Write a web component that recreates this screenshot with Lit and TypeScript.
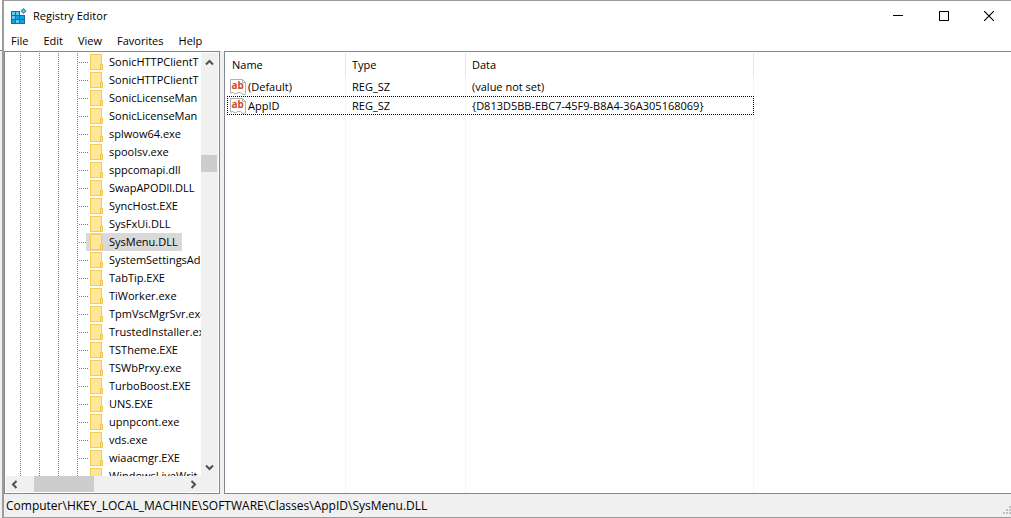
import { LitElement, html, svg, css } from "lit";
import { customElement, state } from "lit/decorators.js";

const KEYS = [
  "SonicHTTPClientT", "SonicHTTPClientT", "SonicLicenseMan", "SonicLicenseMan",
  "splwow64.exe", "spoolsv.exe", "sppcomapi.dll", "SwapAPODll.DLL", "SyncHost.EXE", "SysFxUi.DLL",
  "SysMenu.DLL", "SystemSettingsAd", "TabTip.EXE", "TiWorker.exe", "TpmVscMgrSvr.exe",
  "TrustedInstaller.exe", "TSTheme.EXE", "TSWbPrxy.exe", "TurboBoost.EXE", "UNS.EXE", "upnpcont.exe",
  "vds.exe", "wiaacmgr.EXE", "WindowsLiveWrit",
];

const VALUES = [
  { name: "(Default)", type: "REG_SZ", data: "(value not set)" },
  { name: "AppID", type: "REG_SZ", data: "{D813D5BB-EBC7-45F9-B8A4-36A305168069}" },
];

const folder = svg`
  <rect x="0.5" y="0.5" width="11" height="15" fill="#ffe698" stroke="#f2cc55"/>
  <path d="M10.5 15.5V10.5H12.5V15.5Z" fill="#ffe698" stroke="#edc343"/>`;

const chevron = (d: string) => html`<svg width="9" height="9" viewBox="0 0 9 9" aria-hidden="true">
  <path d=${d} fill="none" stroke="#505050" stroke-width="2"/></svg>`;

@customElement("title-bar")
export class TitleBar extends LitElement {
  static styles = css`
    :host { display: flex; align-items: center; height: 30px; padding-left: 7px; }
    h1 { margin: 0 auto 0 6px; font-size: 11px; font-weight: 400; line-height: 16px; }
    button { width: 46px; height: 30px; padding: 0; border: 0; background: none; display: grid; place-items: center; }
    button:last-child { width: 44px; }
    svg { display: block; }
  `;
  render() {
    return html`
      <svg width="16" height="16" viewBox="0 0 16 16" aria-hidden="true">
        <path d="M0 3H9V7H14V16H0Z" fill="#0b72a8"/>
        <path d="M1 4H4V7H1ZM5 4H8V7H5ZM1 8H4V11H1ZM5 12H8V15H5Z" fill="#5ecbf3"/>
        <path d="M5 8H8V11H5ZM9 8H13V11H9ZM1 12H4V15H1ZM9 12H13V15H9Z" fill="#12a3dc"/>
        <path d="M12.5 0L15.5 3L12.5 6L9.5 3Z" fill="#2c87b5"/>
        <path d="M12.5 1.5L14 3L12.5 4.5L11 3Z" fill="#6fcdf0"/>
      </svg>
      <h1>Registry Editor</h1>
      <button aria-label="Minimize"><svg width="10" height="10"><path d="M0 4.5H10" stroke="#000"/></svg></button>
      <button aria-label="Maximize"><svg width="10" height="10"><rect x="0.5" y="0.5" width="9" height="9" fill="none" stroke="#000"/></svg></button>
      <button aria-label="Close"><svg width="10" height="10"><path d="M0 0L10 10M10 0L0 10" stroke="#000" stroke-width="1.2"/></svg></button>
    `;
  }
}

@customElement("key-tree")
export class KeyTree extends LitElement {
  @state() private selected = "SysMenu.DLL";
  static styles = css`
    :host { display: grid; grid-template: minmax(0, 1fr) 16px / minmax(0, 1fr) 17px; box-sizing: border-box;
      min-height: 0; border: 1px solid #828790; padding: 1px 1px 1px 0; background: #fff; }
    .view { overflow: hidden; display: flex; }
    .guides { flex: none; display: flex; gap: 18px; padding-left: 15px; }
    .guide { width: 1px; background: repeating-linear-gradient(#808080 0 1px, transparent 1px 2px); }
    ul { list-style: none; margin: 0; padding: 0; flex: none; }
    li { height: 18px; display: flex; align-items: center; }
    .branch { width: 9px; height: 1px; margin-left: 1px; flex: none;
      background: repeating-linear-gradient(90deg, #808080 0 1px, transparent 1px 2px); }
    button { font: inherit; color: inherit; white-space: nowrap; border: 0; background: none; height: 18px;
      padding: 0 4px 0 2px; display: flex; align-items: center; gap: 6px; }
    button.on { background: #d9d9d9; margin-left: -2px; padding-left: 4px; }
    svg { display: block; flex: none; }
    .vbar, .hbar { background: #f0f0f0; display: flex; align-items: center; }
    .vbar { flex-direction: column; padding: 5px 1px 4px 0; }
    .hbar { grid-column: 1 / 3; padding: 0 20px 0 4px; margin-left: 1px; }
    .track { flex: 1; display: flex; align-self: stretch; }
    .vbar .track { flex-direction: column; }
    .thumb { background: #cdcdcd; }
    .vbar .thumb { height: 17px; margin-top: 88px; }
    .hbar .thumb { width: 60px; margin-left: 15px; }
  `;
  render() {
    return html`
      <div class="view">
        <div class="guides">${[0, 1, 2, 3].map(() => html`<span class="guide"></span>`)}</div>
        <ul>${KEYS.map((k) => html`<li><span class="branch"></span>
          <button class=${k === this.selected ? "on" : ""} @click=${() => (this.selected = k)}>
            <svg width="13" height="16" viewBox="0 0 13 16" aria-hidden="true">${folder}</svg><span>${k}</span>
          </button></li>`)}</ul>
      </div>
      <div class="vbar">${chevron("M1 6.5L4.5 3L8 6.5")}<div class="track"><div class="thumb"></div></div>${chevron("M1 2.5L4.5 6L8 2.5")}</div>
      <div class="hbar">${chevron("M6.5 1L3 4.5L6.5 8")}<div class="track"><div class="thumb"></div></div>${chevron("M2.5 1L6 4.5L2.5 8")}</div>
    `;
  }
}

@customElement("value-list")
export class ValueList extends LitElement {
  static styles = css`
    :host { display: grid; grid-template-columns: 527px minmax(0, 1fr); box-sizing: border-box;
      min-height: 0; border: 1px solid #828790; border-right: 0; background: #fff; padding: 1px 0 0 2px; }
    .columns { background:
      linear-gradient(#f0f6fc, #f0f6fc) 118px 0 / 1px 100% no-repeat,
      linear-gradient(#f0f6fc, #f0f6fc) 238px 0 / 1px 100% no-repeat,
      linear-gradient(#f0f6fc, #f0f6fc) 526px 0 / 1px 100% no-repeat; }
    table { width: 100%; border-collapse: separate; border-spacing: 0; table-layout: fixed; }
    th, td { padding: 0 0 0 6px; font-weight: 400; text-align: left; white-space: nowrap; box-sizing: border-box; }
    th { height: 24px; border-right: 1px solid #e5e5e5; }
    th:first-child { padding-left: 5px; }
    td { height: 19px; }
    td:first-child { padding-left: 3px; }
    .name { display: flex; align-items: center; gap: 2px; }
    .name svg { display: block; }
    .focus { outline: 1px dotted #000; outline-offset: -1px; }
    .c1 { width: 119px; } .c2 { width: 120px; }
  `;
  render() {
    return html`<div class="columns"><table>
      <colgroup><col class="c1"><col class="c2"><col></colgroup>
      <thead><tr><th>Name</th><th>Type</th><th>Data</th></tr></thead>
      <tbody>${VALUES.map((v, i) => html`<tr class=${i === 1 ? "focus" : ""}>
        <td><span class="name"><svg width="16" height="16" viewBox="0 0 16 16" aria-hidden="true">
          <path d="M.5 14V.5H12.5L15.5 3.5V15L13 15.5L10.5 13.5L8 13.5L5 15L3 13.5Z" fill="#fff" stroke="#b0b0b0"/>
          <path d="M12.5 .5V3.5H15.5" fill="none" stroke="#b0b0b0"/>
          <text x="1.5" y="10" font-family="Noto Sans, sans-serif" font-weight="700" font-size="10" fill="#d64a27">ab</text>
        </svg>${v.name}</span></td><td>${v.type}</td><td>${v.data}</td></tr>`)}</tbody>
    </table></div>`;
  }
}

@customElement("app-root")
export class AppRoot extends LitElement {
  static styles = css`
    :host { display: grid; grid-template: minmax(0, 1fr) / 2px minmax(0, 1fr); height: 100vh; overflow: hidden; color: #000;
      font: 11px/16px "Open Sans", "Noto Sans", sans-serif; background: #fff; }
    .behind { background: #f0f0f0; border-top: 1px solid #828790; margin-top: 50px; }
    .window { display: flex; flex-direction: column; min-width: 0; border: 1px solid #9c9c9c; border-width: 1px 0 1px 2px; }
    nav { display: flex; gap: 15px; height: 20px; padding: 0 7px; }
    nav button { font: inherit; color: inherit; border: 0; background: none; padding: 0; }
    main { flex: 1; min-height: 0; display: grid; grid-template: minmax(0, 1fr) / 216px minmax(0, 1fr); gap: 4px; background: #f0f0f0; }
    footer { background: #f0f0f0; height: 23px; display: flex; align-items: center; justify-content: space-between; padding-left: 2px; font-size: 12px; }
    footer svg { align-self: flex-end; }
  `;
  render() {
    return html`
      <div class="behind"></div>
      <div class="window">
      <title-bar></title-bar>
      <nav>${["File", "Edit", "View", "Favorites", "Help"].map((m) => html`<button>${m}</button>`)}</nav>
      <main><key-tree></key-tree><value-list></value-list></main>
      <footer><span>Computer\\HKEY_LOCAL_MACHINE\\SOFTWARE\\Classes\\AppID\\SysMenu.DLL</span>
        <svg width="8" height="12" aria-hidden="true"><path d="M6 1h2v2h-2zM3 4h2v2h-2zM6 4h2v2h-2zM0 7h2v2h-2zM3 7h2v2h-2zM6 7h2v2h-2z" fill="#bfbfbf"/></svg>
      </footer></div>`;
  }
}
